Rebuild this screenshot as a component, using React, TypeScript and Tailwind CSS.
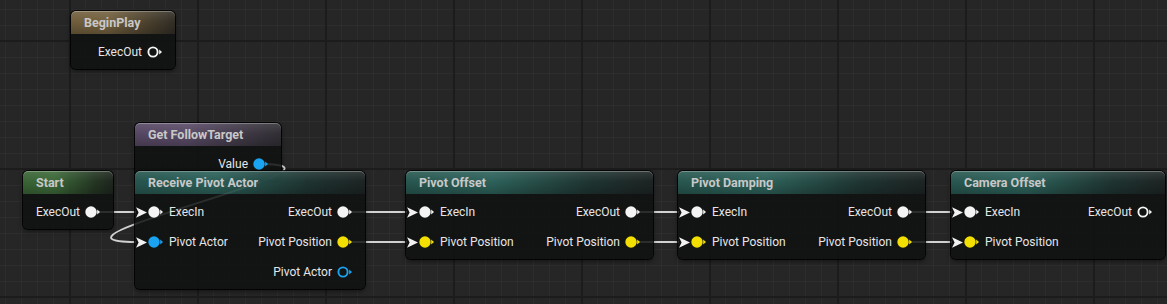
import React from "react";

const FONT = { fontFamily: "Roboto, 'Noto Sans', 'Liberation Sans', sans-serif" };

function Pin({ color, hollow }: { color: string; hollow?: boolean }) {
  return (
    <svg width="15" height="12" viewBox="0 0 15 12" className="shrink-0 block">
      {hollow ? (
        <circle cx="6" cy="6" r="4.6" fill="none" stroke={color} strokeWidth="1.9" />
      ) : (
        <circle cx="6" cy="6" r="5.7" fill={color} />
      )}
      <path d="M12.2 3.6 L15 6 L12.2 8.4 Z" fill={color} />
    </svg>
  );
}

function Arrow() {
  return (
    <svg width="11" height="11" viewBox="0 0 11 11" className="shrink-0 block">
      <path d="M0 0.3 L11 5.5 L0 10.7 L2.6 5.5 Z" fill="#f2f2f2" />
    </svg>
  );
}

const WHITE = "#f4f4f4";
const YELLOW = "#f3e000";
const BLUE = "#1aa3f0";

type RowProps = {
  inLabel?: string;
  inColor?: string;
  outLabel?: string;
  outColor?: string;
  outHollow?: boolean;
};

function Row({ inLabel, inColor, outLabel, outColor, outHollow }: RowProps) {
  return (
    <div className="h-[30px] flex items-center justify-between text-[12px] text-[#e6e6e6]">
      <div className="flex items-center">
        {inLabel && (
          <>
            <span className="ml-[1px] flex">
              <Arrow />
            </span>
            <span className="ml-[1px] flex">
              <Pin color={inColor || WHITE} />
            </span>
            <span className="ml-[6px] leading-none">{inLabel}</span>
          </>
        )}
      </div>
      <div className="flex items-center pr-[13px]">
        {outLabel && (
          <>
            <span className="leading-none">{outLabel}</span>
            <span className="ml-[5px] flex">
              <Pin color={outColor || WHITE} hollow={outHollow} />
            </span>
          </>
        )}
      </div>
    </div>
  );
}

type NodeProps = {
  title: string;
  header: string;
  className: string;
  children: React.ReactNode;
};

function Node({ title, header, className, children }: NodeProps) {
  return (
    <div
      className={
        "absolute rounded-[5px] overflow-hidden shadow-[0_0_0_1px_rgba(0,0,0,0.85),0_2px_5px_rgba(0,0,0,0.55)] " +
        className
      }
    >
      <div className={"relative h-[23px] flex items-center pl-[13px] pt-[1px] " + header}>
        <div className="absolute inset-0 bg-[linear-gradient(to_bottom,rgba(255,255,255,0.10),rgba(255,255,255,0)_45%,rgba(0,0,0,0.22))] shadow-[inset_0_1px_0_rgba(255,255,255,0.28)] rounded-t-[5px]" />
        <span className="relative text-[12.5px] font-bold text-[#c8c8c8] leading-none">{title}</span>
      </div>
      <div className="bg-[rgba(15,16,16,0.86)] pt-[3px] pb-[2px]">{children}</div>
    </div>
  );
}

const TEAL =
  "bg-[linear-gradient(to_right,rgba(40,92,84,0.9),rgba(46,104,96,0.9)_35%,rgba(30,54,51,0.9)_75%,rgba(28,36,35,0.9))]";
const GREEN =
  "bg-[linear-gradient(to_right,rgba(58,104,54,0.92),rgba(62,110,58,0.92)_35%,rgba(36,56,35,0.92)_80%,rgba(30,38,30,0.92))]";
const PURPLE =
  "bg-[linear-gradient(to_right,rgba(90,74,104,0.92),rgba(94,78,108,0.92)_35%,rgba(62,56,68,0.92)_80%,rgba(50,48,54,0.92))]";
const GOLD =
  "bg-[linear-gradient(to_right,rgba(118,98,62,0.92),rgba(122,102,66,0.92)_35%,rgba(72,62,44,0.92)_80%,rgba(50,46,38,0.92))]";

function Grid() {
  return (
    <svg width="1167" height="304" className="absolute inset-0 block">
      <defs>
        <pattern id="minor" width="16" height="16" x="5" y="9" patternUnits="userSpaceOnUse">
          <rect x="0" y="0" width="16" height="16" fill="#262626" />
          <rect x="0" y="0" width="1" height="16" fill="#2d2d2d" />
          <rect x="0" y="0" width="16" height="1" fill="#2d2d2d" />
        </pattern>
        <pattern id="major" width="128" height="128" x="69" y="40" patternUnits="userSpaceOnUse">
          <rect x="0" y="0" width="2" height="128" fill="#1c1c1c" />
          <rect x="0" y="0" width="128" height="2" fill="#1c1c1c" />
        </pattern>
      </defs>
      <rect width="1167" height="304" fill="url(#minor)" />
      <rect width="1167" height="304" fill="url(#major)" />
    </svg>
  );
}

function Wires() {
  const c = "#d2d2d2";
  const w = 1.8;
  const lines: [number, number, number][] = [
    [91, 136, 212],
    [343, 407, 212],
    [343, 407, 242],
    [632, 679, 212],
    [632, 679, 242],
    [903, 952, 212],
    [903, 952, 242],
  ];
  return (
    <svg width="1167" height="304" className="absolute inset-0 block">
      {lines.map(([x1, x2, y], i) => (
        <line key={i} x1={x1} y1={y} x2={x2} y2={y} stroke={c} strokeWidth={w} />
      ))}
      <path d="M260 164 C 380 164, 15 242, 136 242" fill="none" stroke={c} strokeWidth={w} />
    </svg>
  );
}

export default function App() {
  return (
    <div className="relative w-[1167px] h-[304px] overflow-hidden bg-[#262626]" style={FONT}>
      <Grid />
      <Wires />

      <Node title="BeginPlay" header={GOLD} className="left-[71px] top-[11px] w-[104px]">
        <Row outLabel="ExecOut" outHollow />
      </Node>

      <Node title="Get FollowTarget" header={PURPLE} className="left-[135px] top-[123px] w-[146px]">
        <Row outLabel="Value" outColor={BLUE} />
      </Node>

      <Node title="Start" header={GREEN} className="left-[23px] top-[171px] w-[90px]">
        <Row outLabel="ExecOut" />
      </Node>

      <Node title="Receive Pivot Actor" header={TEAL} className="left-[135px] top-[171px] w-[230px]">
        <Row inLabel="ExecIn" outLabel="ExecOut" />
        <Row inLabel="Pivot Actor" inColor={BLUE} outLabel="Pivot Position" outColor={YELLOW} />
        <Row outLabel="Pivot Actor" outColor={BLUE} outHollow />
      </Node>

      <Node title="Pivot Offset" header={TEAL} className="left-[406px] top-[171px] w-[247px]">
        <Row inLabel="ExecIn" outLabel="ExecOut" />
        <Row inLabel="Pivot Position" inColor={YELLOW} outLabel="Pivot Position" outColor={YELLOW} />
      </Node>

      <Node title="Pivot Damping" header={TEAL} className="left-[678px] top-[171px] w-[247px]">
        <Row inLabel="ExecIn" outLabel="ExecOut" />
        <Row inLabel="Pivot Position" inColor={YELLOW} outLabel="Pivot Position" outColor={YELLOW} />
      </Node>

      <Node title="Camera Offset" header={TEAL} className="left-[951px] top-[171px] w-[214px]">
        <Row inLabel="ExecIn" outLabel="ExecOut" outHollow />
        <Row inLabel="Pivot Position" inColor={YELLOW} />
      </Node>
    </div>
  );
}
